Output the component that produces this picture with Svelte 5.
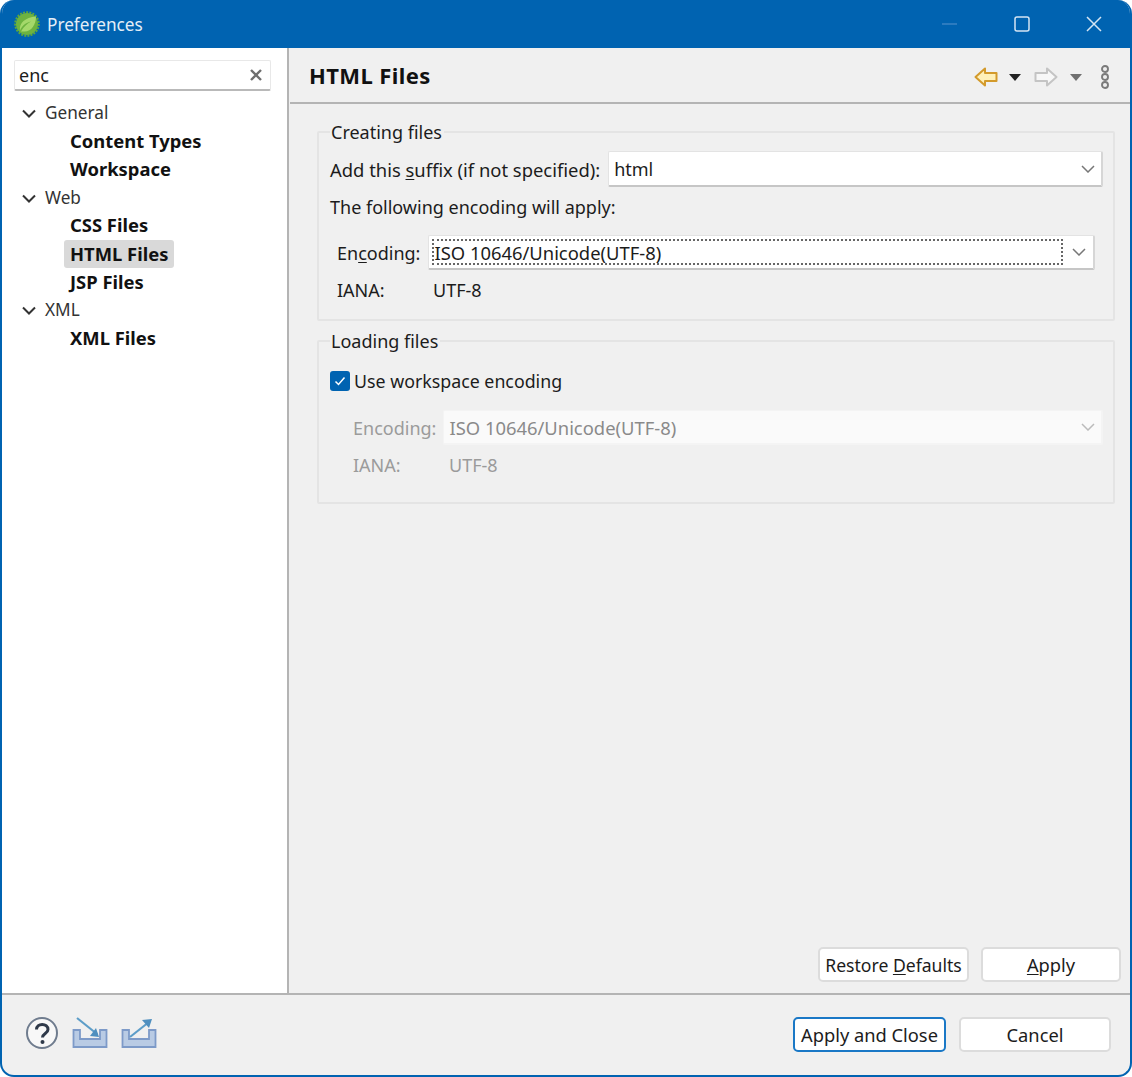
<script>
  const tree = [
    { name: 'General', kids: ['Content Types', 'Workspace'] },
    { name: 'Web', kids: ['CSS Files', 'HTML Files', 'JSP Files'] },
    { name: 'XML', kids: ['XML Files'] }
  ];
</script>

<div class="window">
  <header class="titlebar">
    <svg class="logo" width="26" height="26" viewBox="0 0 26 26">
      <circle cx="13" cy="13" r="11.8" fill="none" stroke="#5fa838" stroke-width="2" stroke-dasharray="2 1.2" />
      <circle cx="13" cy="13" r="11" fill="#6db33f" />
      <path d="M6 19.5C5 12 11 6.5 22 5.5 22 14 17 21 10 20.5 9 20.5 8 20.5 7 20.5 10 15.5 13 12.5 17 10.5 12 11.5 8 14.5 6 19.5Z" fill="#a5d86a" />
    </svg>
    <span class="wintitle">Preferences</span>
    <div class="winctrl">
      <svg width="16" height="16" viewBox="0 0 16 16"><path d="M0 8H15" stroke="#3f86c6" stroke-width="1.4" /></svg>
      <svg width="16" height="16" viewBox="0 0 16 16"><rect x="1" y="1" width="14" height="14" rx="2" fill="none" stroke="#d5e5f3" stroke-width="1.5" /></svg>
      <svg width="16" height="16" viewBox="0 0 16 16"><path d="M1 1L15 15M15 1L1 15" stroke="#d5e5f3" stroke-width="1.5" /></svg>
    </div>
  </header>

  <div class="main">
    <aside class="side">
      <div class="search">
        <span>enc</span>
        <svg width="12" height="12" viewBox="0 0 12 12"><path d="M1 1L11 11M11 1L1 11" stroke="#6e6e6e" stroke-width="2.4" /></svg>
      </div>
      <div class="tree">
        {#each tree as group}
          <div class="node">
            <svg width="14" height="9" viewBox="0 0 14 9"><path d="M1 1.5L7 7.5L13 1.5" fill="none" stroke="#333" stroke-width="2" /></svg>
            <span>{group.name}</span>
          </div>
          {#each group.kids as kid}
            <div class="leaf"><span class:sel={kid === 'HTML Files'}>{kid}</span></div>
          {/each}
        {/each}
      </div>
    </aside>

    <section class="content">
      <div class="head">
        <h1>HTML Files</h1>
        <div class="tools">
          <svg class="arrow" width="24" height="20" viewBox="0 0 24 20"><path d="M1.5 10L11 1.5V6H22.5V14H11V18.5Z" fill="#fff0b8" stroke="#d39a2b" stroke-width="2" stroke-linejoin="round" /></svg>
          <svg class="tri" width="12" height="7" viewBox="0 0 12 7"><path d="M0 0H12L6 7Z" fill="#222" /></svg>
          <svg class="arrow2" width="24" height="20" viewBox="0 0 24 20"><path d="M22.5 10L13 1.5V6H1.5V14H13V18.5Z" fill="#f7f7f7" stroke="#c4c4c4" stroke-width="2" stroke-linejoin="round" /></svg>
          <svg class="tri2" width="12" height="7" viewBox="0 0 12 7"><path d="M0 0H12L6 7Z" fill="#707070" /></svg>
          <svg class="dots" width="10" height="24" viewBox="0 0 10 24"><g fill="#eee" stroke="#7a7a7a" stroke-width="1.9"><circle cx="5" cy="4" r="3" /><circle cx="5" cy="12" r="3" /><circle cx="5" cy="20" r="3" /></g></svg>
        </div>
      </div>

      <div class="panel">
        <fieldset class="creating">
          <legend>Creating files</legend>
          <div class="row suffix">
            <span class="wide">Add this <u>s</u>uffix (if not specified):</span>
            <div class="combo grow tall">
              <span class="val">html</span>
              <svg width="14" height="8" viewBox="0 0 14 8"><path d="M1 1L7 7L13 1" fill="none" stroke="#777" stroke-width="1.5" /></svg>
            </div>
          </div>
          <div class="apply">The following encoding will apply:</div>
          <div class="row enc">
            <span class="lbl">En<u>c</u>oding:</span>
            <div class="combo grow focus">
              <span class="val dotted wide">ISO 10646/Unicode(UTF-8)</span>
              <svg width="14" height="8" viewBox="0 0 14 8"><path d="M1 1L7 7L13 1" fill="none" stroke="#777" stroke-width="1.5" /></svg>
            </div>
          </div>
          <div class="iana"><span class="lbl2">IANA:</span><span>UTF-8</span></div>
        </fieldset>

        <fieldset class="loading">
          <legend>Loading files</legend>
          <div class="check">
            <span class="box"><svg width="14" height="12" viewBox="0 0 14 12"><path d="M2.5 6.5L5.5 9.5L11.5 2.5" fill="none" stroke="#fff" stroke-width="1.5" /></svg></span>
            <span class="usetext">Use workspace encoding</span>
          </div>
          <div class="row enc2 off">
            <span class="lbl">Encoding:</span>
            <div class="combo grow disabled">
              <span class="val wide">ISO 10646/Unicode(UTF-8)</span>
              <svg width="14" height="8" viewBox="0 0 14 8"><path d="M1 1L7 7L13 1" fill="none" stroke="#bbb" stroke-width="1.5" /></svg>
            </div>
          </div>
          <div class="iana off"><span class="lbl3">IANA:</span><span>UTF-8</span></div>
        </fieldset>

        <div class="actions">
          <button class="restore">Restore <u>D</u>efaults</button>
          <button class="applybtn"><u>A</u>pply</button>
        </div>
      </div>
    </section>
  </div>

  <footer class="bottom">
    <div class="icons">
      <svg width="34" height="34" viewBox="0 0 34 34">
        <circle cx="17" cy="17" r="15" fill="#f8f8f8" stroke="#6f7c8e" stroke-width="2" />
        <path d="M11.5 13.5C11.5 6.5 23 7 23 13.5 23 17.5 17.5 17.5 17.5 21.5" fill="none" stroke="#2f3a4a" stroke-width="3" />
        <circle cx="17.5" cy="26" r="2" fill="#2f3a4a" />
      </svg>
      <svg class="imp" width="36" height="32" viewBox="0 0 36 32">
        <path d="M1.5 13H8V22H28V13H34.5V30H1.5Z" fill="#b9cbe4" stroke="#7d9ac8" stroke-width="1.8" />
        <path d="M5 1L25 17" stroke="#5d9dc8" stroke-width="2.2" />
        <path d="M27 20L24 11L18 19Z" fill="#4f8fbf" />
      </svg>
      <svg class="exp" width="36" height="32" viewBox="0 0 36 32">
        <path d="M1.5 13H8V22H28V13H34.5V30H1.5Z" fill="#b9cbe4" stroke="#7d9ac8" stroke-width="1.8" />
        <path d="M9 20L28 5" stroke="#5d9dc8" stroke-width="2.2" />
        <path d="M31 2L21 3L28 11Z" fill="#4f8fbf" />
      </svg>
    </div>
    <div class="btns">
      <button class="default">Apply and Close</button>
      <button class="cancel">Cancel</button>
    </div>
  </footer>
</div>

<style>
  :global(body) {
    margin: 0;
    background: #fff;
  }
  .window {
    width: 1132px;
    height: 1077px;
    box-sizing: border-box;
    display: flex;
    flex-direction: column;
    border: 2px solid #0063b1;
    border-top: 0;
    border-radius: 14px;
    overflow: hidden;
    background: #f0f0f0;
    font-family: "Noto Sans", "Open Sans", sans-serif;
    font-size: 18px;
    color: #1c1c1c;
  }
  u { text-underline-offset: 2px; }
  .wide { font-size: 18.4px; }
  .titlebar {
    height: 48px;
    flex: none;
    margin: 0 -2px;
    background: #0063b1;
    display: flex;
    align-items: center;
    padding: 0 30px 0 14px;
    color: #e4eef7;
  }
  .logo { margin-right: 7px; }
  .wintitle { font-size: 17.2px; }
  .winctrl {
    margin-left: auto;
    display: flex;
    gap: 56px;
    align-items: center;
  }
  .main { flex: 1; display: flex; min-height: 0; }
  .side {
    width: 285px;
    flex: none;
    background: #fff;
    border-right: 2px solid #b4b4b4;
    box-sizing: content-box;
  }
  .search {
    margin: 12px 16px 0 12px;
    height: 31px;
    box-sizing: border-box;
    background: #fff;
    border: 1px solid #e8e8e8;
    border-bottom: 2px solid #b9b9b9;
    border-radius: 2px;
    display: flex;
    align-items: center;
    justify-content: space-between;
    padding: 0 8px 0 4px;
  }
  .tree { padding-top: 7.5px; }
  .node, .leaf {
    height: 28.2px;
    display: flex;
    align-items: center;
  }
  .node svg { margin: 2px 9px 0 20px; }
  .node span { color: #333; font-size: 17.2px; }
  .leaf { padding-left: 62px; font-weight: 700; color: #111; font-size: 18.4px; }
  .leaf span { padding: 0 6px; line-height: 28px; border-radius: 3px; }
  .leaf .sel { background: #d9d9d9; }

  .content { flex: 1; display: flex; flex-direction: column; min-width: 0; margin-left: 1px; }
  .head {
    height: 52px;
    flex: none;
    display: flex;
    align-items: center;
    justify-content: space-between;
    padding: 0 20px 2px 19px;
    border-bottom: 2px solid #b4b4b4;
    box-sizing: content-box;
  }
  h1 { margin: 0; padding-top: 2px; font-size: 22px; letter-spacing: 0.4px; font-weight: 700; color: #111; }
  .tools { display: flex; align-items: center; padding-top: 6px; }
  .tri { margin: 0 19px 0 11px; }
  .tri2 { margin: 0 18px 0 12px; }
  .arrow2 { margin-left: -6px; }
  .panel {
    flex: 1;
    display: flex;
    flex-direction: column;
    padding: 14px 10px 11px 27px;
  }
  fieldset {
    margin: 0 5px 0 0;
    padding: 0 10px 0 11px;
    border: 2px solid #e4e4e4;
    border-radius: 2px;
    min-width: 0;
  }
  legend { padding: 0 2px 0 1px; margin-left: 0; line-height: 28px; }
  .creating { height: 203px; box-sizing: border-box; }
  .loading { height: 177px; box-sizing: border-box; margin-top: 6px; }
  .row { display: flex; align-items: center; }
  .grow { flex: 1; min-width: 0; }
  .suffix { gap: 8px; margin-top: 5px; }
  .combo {
    height: 35px;
    box-sizing: border-box;
    background: #fff;
    border: 1px solid #e3e3e3;
    border-bottom: 2px solid #c6c6c6;
    border-right: 2px solid #d6d6d6;
    border-radius: 2px;
    display: flex;
    align-items: center;
    justify-content: space-between;
    padding: 0 6px 0 5px;
  }
  .tall { height: 36px; }
  .apply { margin-top: 6px; height: 32px; line-height: 28px; }
  .enc { margin: 10px 8px 0 7px; gap: 8px; }
  .focus { padding: 3px 7px 3px 3px; }
  .dotted {
    flex: 1;
    align-self: stretch;
    display: flex;
    align-items: center;
    border: 2px dotted #666;
    margin-right: 9px;
  }
  .iana { display: flex; margin: 6px 0 0 7px; line-height: 28px; }
  .lbl2 { width: 96px; }
  .check { display: flex; align-items: center; gap: 4px; margin-top: 12px; height: 28px; }
  .usetext { font-size: 17.8px; }
  .box {
    width: 20px;
    height: 20px;
    background: #0063b1;
    border-radius: 3px;
    display: flex;
    align-items: center;
    justify-content: center;
  }
  .enc2 { margin: 15px 0 0 23px; gap: 7px; }
  .off { color: #9b9b9b; }
  .disabled { background: #fafafa; border-color: #f4f4f4; color: #8a8a8a; padding-left: 5px; }
  .iana.off { margin: 6px 0 0 23px; }
  .lbl3 { width: 96px; }
  .actions {
    margin: auto -1px 0 0;
    display: flex;
    justify-content: flex-end;
    gap: 12px;
  }
  button {
    font: inherit;
    font-size: 18.3px;
    color: inherit;
    height: 35px;
    padding: 0;
    background: #fff;
    border: 2px solid #dcdcdc;
    border-radius: 5px;
    box-sizing: border-box;
    white-space: nowrap;
  }
  .restore { width: 151px; font-size: 17.6px; }
  .applybtn { width: 140px; }
  .bottom {
    height: 82px;
    flex: none;
    box-sizing: border-box;
    border-top: 2px solid #b4b4b4;
    display: flex;
    align-items: center;
    justify-content: space-between;
    padding: 0 19px 0 23px;
  }
  .icons { display: flex; align-items: center; gap: 13px; margin-bottom: 4px; }
  .btns { display: flex; gap: 13px; padding-bottom: 1px; }
  .default { width: 153px; border: 2px solid #1a78c6; }
  .cancel { width: 152px; }
</style>
